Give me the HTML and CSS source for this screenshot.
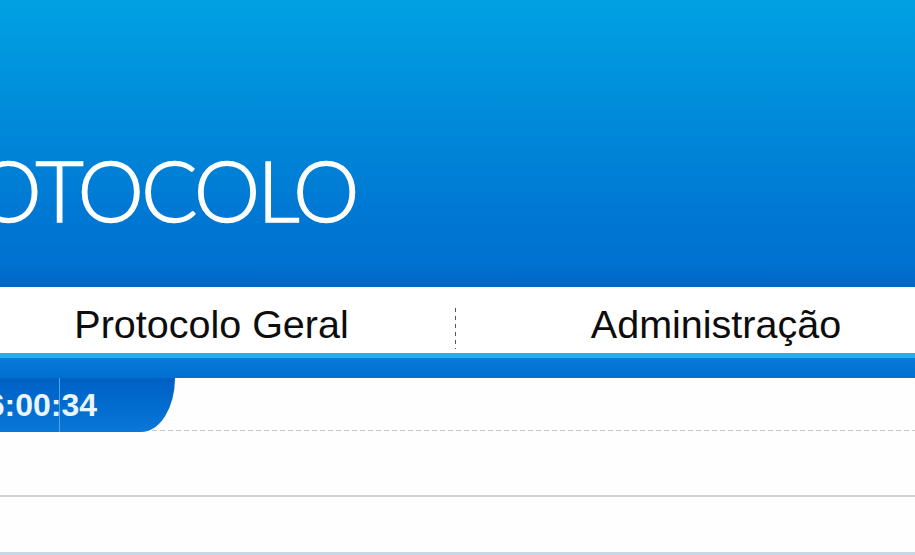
FILE: index.html
```html
<!DOCTYPE html>
<html lang="pt">
<head>
<meta charset="utf-8">
<title>Protocolo</title>
<link rel="stylesheet" href="styles.css">
</head>
<body>
<div class="page">
  <header class="masthead">
    <h1 class="brand">PROTOCOLO</h1>
  </header>
  <nav class="nav">
    <a class="nav-item nav-item-first">Protocolo Geral</a>
    <span class="nav-sep"></span>
    <a class="nav-item nav-item-second">Administração</a>
  </nav>
  <div class="band"></div>
  <div class="tab-row">
    <div class="clock-tab"><span class="clock">16:00:34</span></div>
  </div>
  <div class="section section-top"></div>
  <div class="section section-bottom"></div>
</div>
</body>
</html>
```
FILE: styles.css
```css
html, body {
  margin: 0;
  padding: 0;
  background: #fefefe;
}
.page {
  width: 915px;
  height: 555px;
  overflow: hidden;
  display: flex;
  flex-direction: column;
}
.masthead {
  height: 287px;
  flex: none;
  box-sizing: border-box;
  padding-top: 148px;
  background: linear-gradient(to bottom, #00a1e3 0%, #008bda 40%, #0079d4 72%, #0071d0 92%, #0066c6 100%);
  overflow: hidden;
}
.brand {
  margin: 0 0 0 -118px;
  font-family: Lato, "Noto Sans", sans-serif;
  font-weight: 300;
  font-size: 84px;
  line-height: 84px;
  letter-spacing: -3px;
  color: #ffffff;
  -webkit-text-stroke: 1.3px #ffffff;
  white-space: nowrap;
}
.nav {
  height: 66px;
  flex: none;
  display: flex;
  background: #ffffff;
  margin-left: -32px;
}
.nav-item {
  flex: none;
  box-sizing: border-box;
  height: 66px;
  padding-top: 18px;
  text-align: center;
  font-family: "Liberation Sans", Arial, sans-serif;
  font-size: 39.5px;
  line-height: 39px;
  color: #0d0d0d;
  white-space: nowrap;
}
.nav-item-first { width: 487px; }
.nav-item-second { width: 520px; }
.nav-sep {
  flex: none;
  width: 1px;
  height: 41px;
  margin-top: 21px;
  background: repeating-linear-gradient(to bottom, #555555 0 4px, transparent 4px 8px);
}
.band {
  height: 25px;
  flex: none;
  box-sizing: border-box;
  border-top: 5px solid #1fb1ec;
  background: linear-gradient(to bottom, #0a7ad8, #0070d0);
}
.tab-row {
  height: 54px;
  flex: none;
  background: repeating-linear-gradient(to right, #c6c6c6 0 5px, transparent 5px 8px) left bottom / 100% 1px no-repeat;
  background-position: 0 52px;
}
.clock-tab {
  position: relative;
  width: 175px;
  height: 54px;
  box-sizing: border-box;
  border-bottom-right-radius: 34px 54px;
  background: linear-gradient(to bottom, #0060c4 0%, #006acd 45%, #0a78d8 100%);
  overflow: hidden;
}
.clock-tab::after {
  content: "";
  position: absolute;
  left: 59px;
  top: 0;
  width: 1px;
  height: 54px;
  background: #4aa6ee;
}
.clock {
  display: block;
  margin-left: -31px;
  font-family: "Liberation Sans", Arial, sans-serif;
  font-weight: 700;
  font-size: 32px;
  line-height: 54px;
  color: #e8f4ff;
  white-space: nowrap;
}
.section-top {
  height: 63px;
  flex: none;
  border-bottom: 2px solid #d3d1cb;
}
.section-bottom {
  height: 55px;
  flex: none;
  border-bottom: 3px solid #c9d6e6;
}
```
